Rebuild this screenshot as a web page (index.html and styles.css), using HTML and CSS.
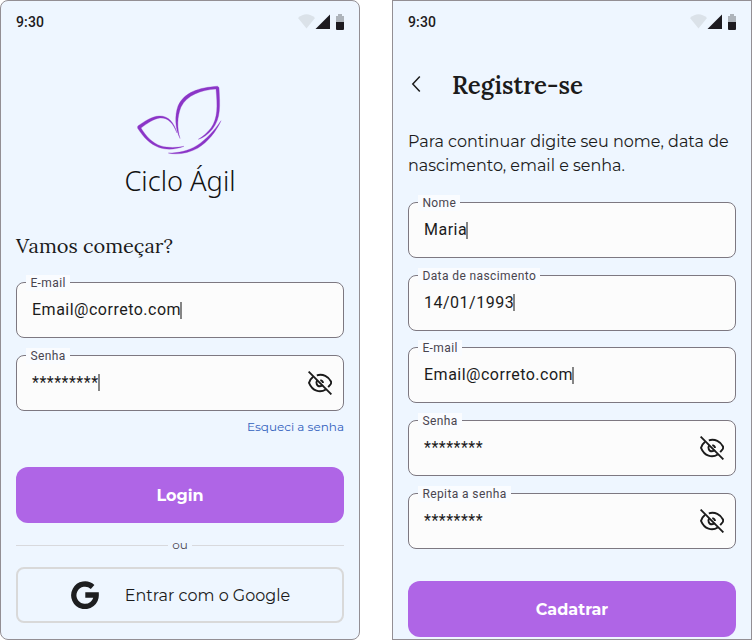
FILE: index.html
```html
<!DOCTYPE html>
<html lang="pt-BR">
<head>
<meta charset="utf-8">
<title>Ciclo Ágil</title>
<link rel="stylesheet" href="styles.css">
</head>
<body>
<svg class="defs" width="0" height="0" aria-hidden="true">
  <symbol id="status" viewBox="0 0 46 16">
    <path d="M0 4Q8.500-3.500 17 4L8.500 14.500Z" fill="#dbe2e9"/>
    <path d="M17.500 15L32 .500V15Z" fill="#1d1b20"/>
    <path d="M38 2h2V0h4v2h2v6h-8Z" fill="#aeb4bb"/>
    <path d="M38 8h8v7q0 1-1 1h-6q-1 0-1-1Z" fill="#1d1b20"/>
  </symbol>
  <symbol id="eye-off" viewBox="0 0 24 24">
    <g fill="none" stroke="#1b1b1b" stroke-width="1.900">
      <path d="M.600.600L23.400 23.400"/>
      <path d="M8.800 4.300C15 2.600 20.500 5.500 23 10.500Q23.400 12 22.600 13.300L20.200 16.200"/>
      <path d="M5.100 5.800Q2.500 7.800 1 11.800C4.500 20.200 12 22.200 17.800 18.500"/>
      <path d="M9.300 9.300C7.500 11.300 8.700 15.300 12 15.300Q13.700 15.300 14.700 14.200M12.300 9.200Q14.800 9.900 15 12"/>
    </g>
  </symbol>
</svg>
<main class="screens">
  <section class="phone phone-login">
    <header class="status"><span>9:30</span><svg width="46" height="16"><use href="#status"/></svg></header>
    <div class="brand">
      <svg width="84" height="70" viewBox="0 0 84 70" fill="#8b35c7" stroke="#8b35c7" stroke-width=".3">
        <path d="M43 52.500C38 42 37.500 30 41 20C47 6 62 1.500 80.500 .200L82 1.500C83 20 84 32 75.500 43C71 48.500 66 52 61.300 53.300C66 50.500 70 47 74 42C81 32 80.500 20 79 3C64 4 50 9 44 21C40 31 40 42 43 52.500Z"/>
        <path d="M40 47C37 36 31 29.500 22 30C15 30.500 8 35 .800 40L.500 42C7 52 13 58 22 61.500C31 64.500 40 63 47 60.300C40 61.800 31 62 24 60C15 57 9 50 4 42C10 37.500 17 32.500 23 32C31 31.500 36 37 40 47Z"/>
        <path d="M31.300 67C40 69 51 67.500 61 62C71 55.500 79 46 84 34.700C77 45 69 53.500 60 59.500C51 65 42 67 31.300 67Z"/>
      </svg>
      <span class="brand-name">Ciclo Ágil</span>
    </div>
    <h2 class="welcome">Vamos começar?</h2>
    <div class="fields">
      <div class="field"><label>E-mail</label><span class="value caret">Email@correto.com</span></div>
      <div class="field"><label>Senha</label><span class="value caret">*********</span><svg width="24" height="24"><use href="#eye-off"/></svg></div>
    </div>
    <a class="forgot">Esqueci a senha</a>
    <button class="primary">Login</button>
    <div class="divider"><span>ou</span></div>
    <button class="google">
      <svg width="28" height="28" viewBox="0 0 28 28" fill="none" stroke="#1d1e20" stroke-width="5.300"><path d="M21.600 6A11.200 11.200 0 1 0 25.200 14H14.300"/></svg>
      <span>Entrar com o Google</span>
    </button>
  </section>
  <section class="phone phone-register">
    <header class="status"><span>9:30</span><svg width="46" height="16"><use href="#status"/></svg></header>
    <div class="title-row">
      <svg width="16" height="24" viewBox="0 0 16 24" fill="none" stroke="#1b1b1b" stroke-width="1.500"><path d="M11.800 3.500L4.800 11L11.800 18.500"/></svg>
      <h1>Registre-se</h1>
    </div>
    <p class="intro">Para continuar digite seu nome, data de nascimento, email e senha.</p>
    <div class="fields">
      <div class="field"><label>Nome</label><span class="value caret">Maria</span></div>
      <div class="field"><label>Data de nascimento</label><span class="value caret">14/01/1993</span></div>
      <div class="field"><label>E-mail</label><span class="value caret">Email@correto.com</span></div>
      <div class="field"><label>Senha</label><span class="value">********</span><svg width="24" height="24"><use href="#eye-off"/></svg></div>
      <div class="field"><label>Repita a senha</label><span class="value">********</span><svg width="24" height="24"><use href="#eye-off"/></svg></div>
    </div>
    <button class="primary">Cadatrar</button>
  </section>
</main>
</body>
</html>
```
FILE: styles.css
```css
* { box-sizing: border-box; }
body { margin: 0; background: #fff; color: #1b1b1b; overflow: hidden; }
.defs { display: block; height: 0; }
svg { display: block; flex: none; }
.screens { display: flex; justify-content: space-between; width: 752px; height: 640px; }
.phone {
  width: 360px; height: 640px; padding: 0 15px; background: #eef6ff;
  border: 1px solid #938f94; display: flex; flex-direction: column;
  font-family: Montserrat, Inter, sans-serif;
}
.phone-login { border-radius: 8px; }
.status {
  height: 42px; flex: none; display: flex; align-items: center; justify-content: space-between;
  font: 500 14px/20px Roboto, sans-serif; letter-spacing: .14px; color: #1d1b20;
}
.brand { display: flex; flex-direction: column; align-items: center; margin-top: 43px; height: 112px; }
.brand svg { overflow: visible; margin-left: -2px; }
.brand-name { font: 350 27.2px/38px "Noto Sans", "Open Sans", sans-serif; color: #111; margin-top: 6px; white-space: nowrap; }
h1, h2 { margin: 0; font-family: Lora, "Liberation Serif", serif; white-space: nowrap; }
.welcome { font-size: 20px; line-height: 28px; font-weight: 400; margin: 34px 0 22px; }
.fields { display: flex; flex-direction: column; gap: 16.67px; }
.field {
  position: relative; height: 56px; flex: none; border: 1px solid #7d7881; border-radius: 8px; background: #fcfcfc;
  display: flex; align-items: center; justify-content: space-between; padding: 0 11px 0 15px;
  font-family: Roboto, sans-serif;
}
.field label {
  position: absolute; top: -8px; left: 9px; padding: 0 4px 0 4.4px; background: #fafcff;
  font-size: 12px; line-height: 16px; letter-spacing: .4px; color: #49454f;
}
.value { font-size: 16px; line-height: 20px; letter-spacing: .5px; display: flex; align-items: center; }
.caret::after { content: ""; width: 2px; height: 17px; margin-left: -1px; background: #858585; }
.forgot { align-self: flex-end; margin-top: 8px; font-size: 12px; line-height: 16px; color: #3160bd; }
button { font-family: inherit; width: 100%; height: 56px; flex: none; padding: 1px 0 0; display: flex; align-items: center; justify-content: center; }
.primary { margin-top: 32px; border: 0; border-radius: 12px; background: #af65e6; color: #fff; font-size: 16px; font-weight: 700; }
.divider { display: flex; align-items: center; gap: 4px; height: 16px; margin: 14px 0; font-size: 12px; color: #49454f; }
.divider::before, .divider::after { content: ""; flex: 1; height: 1px; margin-top: 1px; background: #d8d9dd; }
.google { border: 2px solid #d9d9d9; border-radius: 8px; background: transparent; gap: 26px; padding-left: 1px; color: #1b1b1b; font-size: 16px; }
.title-row { display: flex; align-items: center; gap: 28px; height: 32px; margin-top: 26px; }
h1 { font-size: 24px; line-height: 32px; font-weight: 600; padding-top: 2px; }
.intro { margin: 29px 0 24px; font-size: 16px; line-height: 24px; }
```
